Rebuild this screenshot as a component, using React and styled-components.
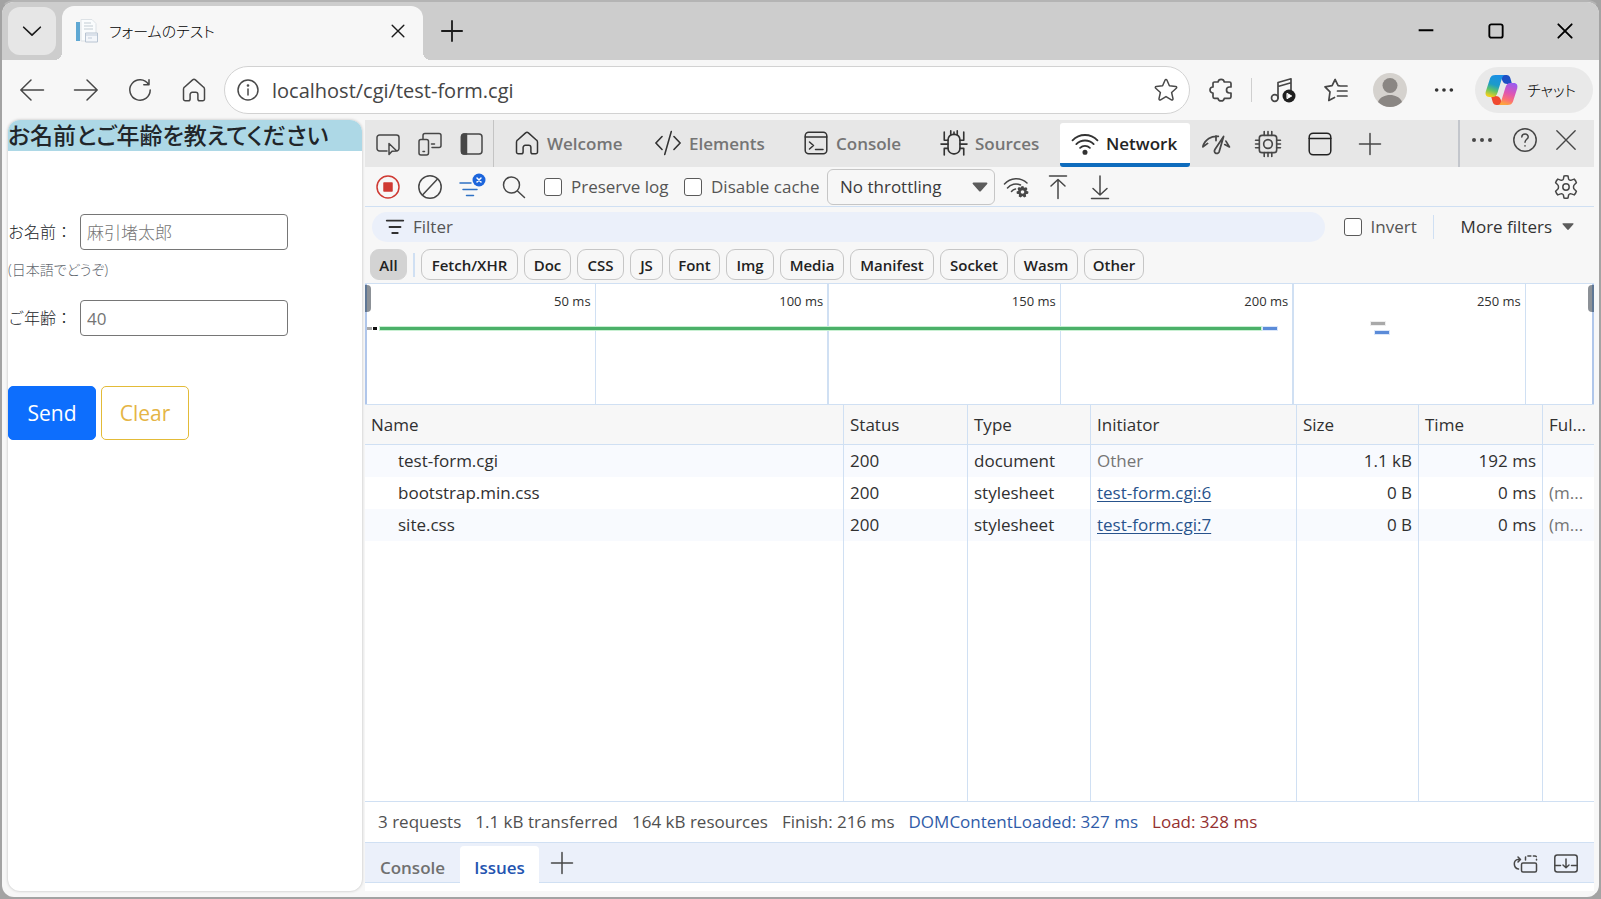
import React, { useState } from 'react';
import styled, { createGlobalStyle } from 'styled-components';

const UI_FONT = `'Open Sans', 'Noto Sans CJK JP', sans-serif`;
const LINE_COLOR = '#d0e0f3';
const ICON_COLOR = '#474747';
const SPAN_MS = 264;

const GlobalStyle = createGlobalStyle`
  * {
    box-sizing: border-box;
  }
  body {
    margin: 0;
    background: #a3a3a3;
    font-family: ${UI_FONT};
    font-size: 16px;
    line-height: 24px;
    color: #303030;
  }
  button, input, select {
    font-family: inherit;
    margin: 0;
  }
`;

const Window = styled.div`
  display: flex;
  flex-direction: column;
  height: 100vh;
  border: 2px solid #a3a3a3;
  border-top-color: #b4b4b4;
  border-radius: 14px;
  background: #f7f7f7;
  overflow: hidden;
`;

const Svg = styled.svg`
  display: block;
  flex: none;
  fill: none;
  stroke: currentColor;
  stroke-width: ${(props) => props.$weight || 1.5};
  stroke-linecap: round;
  stroke-linejoin: round;
  overflow: visible;
`;

const Icon = ({ size = 24, weight, children }) => (
  <Svg
    width={size}
    height={size}
    viewBox="0 0 24 24"
    $weight={weight}
    aria-hidden="true">
    {children}
  </Svg>
);

const IconButton = styled.button`
  display: flex;
  align-items: center;
  justify-content: center;
  flex: none;
  width: ${(props) => props.$width || 42}px;
  height: ${(props) => props.$height || 40}px;
  padding: 0;
  border: 0;
  background: none;
  color: ${(props) => props.$color || ICON_COLOR};
`;

const Spacer = styled.div`
  flex: 1;
`;

/* title bar */

const TitleBar = styled.div`
  display: flex;
  align-items: flex-end;
  flex: none;
  height: 58px;
  padding-left: 6px;
  background: #cdcdcd;
`;

const TabMenuButton = styled.button`
  display: flex;
  align-items: center;
  justify-content: center;
  align-self: center;
  width: 48px;
  height: 48px;
  margin-right: 6px;
  padding: 0;
  border: 0;
  border-radius: 12px;
  background: #e6e6e6;
  color: #1b1b1b;
`;

const BrowserTab = styled.div`
  position: relative;
  display: flex;
  align-items: center;
  width: 361px;
  height: 54px;
  padding: 0 12px 4px 13px;
  border-radius: 12px 12px 0 0;
  background: #f7f7f7;
  &::before,
  &::after {
    content: '';
    position: absolute;
    bottom: 0;
    width: 8px;
    height: 8px;
  }
  &::before {
    left: -8px;
    background: radial-gradient(circle at 0 0, #cdcdcd 8px, #f7f7f7 8px);
  }
  &::after {
    right: -8px;
    background: radial-gradient(circle at 100% 0, #cdcdcd 8px, #f7f7f7 8px);
  }
`;

const TabTitle = styled.span`
  flex: 1;
  padding-left: 10px;
  font-size: 15px;
  font-weight: 300;
  font-feature-settings: 'palt';
  color: #000;
`;

/* address row */

const AddressRow = styled.div`
  display: flex;
  align-items: center;
  flex: none;
  height: 60px;
  padding: 0 6px 0 3px;
`;

const AddressBar = styled.label`
  display: flex;
  align-items: center;
  flex: 1;
  height: 48px;
  margin: 0 10px 0 3px;
  padding: 0 11px;
  border: 1px solid #d2d2d2;
  border-radius: 24px;
  background: #fff;
  color: #4a4a4a;
`;

const AddressInput = styled.input`
  flex: 1;
  min-width: 0;
  padding: 0 12px;
  border: 0;
  outline: 0;
  background: none;
  font-size: 20px;
  color: #454545;
`;

const Divider = styled.span`
  flex: none;
  width: ${(props) => props.$width || 1}px;
  height: ${(props) => props.$height || 24}px;
  margin: 0 ${(props) => props.$gap || 0}px;
  background: ${(props) => props.$color || '#cfcfcf'};
`;

const ChatButton = styled.button`
  display: flex;
  align-items: center;
  gap: 9px;
  width: 118px;
  height: 46px;
  padding: 0 10px;
  border: 0;
  border-radius: 23px;
  background: #e9e9e9;
  font-size: 15px;
  line-height: 20px;
  font-weight: 300;
  font-feature-settings: 'palt';
  color: #000;
`;

/* page */

const Content = styled.div`
  display: flex;
  flex: 1;
  min-height: 0;
  gap: 3px;
  padding: 0 5px 6px 6px;
`;

const Page = styled.main`
  flex: none;
  width: 354px;
  overflow: hidden;
  border-radius: 12px;
  background: #fff;
  box-shadow: 0 0 3px #b8b8b8;
  color: #212529;
`;

const PageTitle = styled.h1`
  margin: 0 0 63px;
  background: lightblue;
  font-size: 23px;
  line-height: 31px;
  font-weight: 500;
  font-feature-settings: 'palt';
  white-space: nowrap;
`;

const FormRow = styled.div`
  display: flex;
  align-items: center;
  gap: 8px;
  height: 36px;
  font-size: 16px;
`;

const FormLabel = styled.label`
  width: 64px;
  font-weight: 300;
  white-space: nowrap;
`;

const FormInput = styled.input`
  width: 208px;
  height: 36px;
  padding: 0 6px;
  border: 1px solid #767676;
  border-radius: 4px;
  font-size: 17px;
  &::placeholder {
    color: #757575;
    opacity: 1;
  }
  &:placeholder-shown {
    font-weight: ${(props) => (props.type === 'number' ? 400 : 300)};
  }
`;

const Hint = styled.div`
  height: 50px;
  padding-top: 8px;
  font-size: 14px;
  font-weight: 300;
  font-feature-settings: 'palt';
  color: #5f676e;
`;

const ButtonRow = styled.div`
  display: flex;
  gap: 5px;
  padding-top: 50px;
`;

const FormButton = styled.button`
  width: 88px;
  height: 54px;
  padding: 0;
  border: 1px solid ${(props) => (props.$primary ? '#0d6efd' : '#e3bb38')};
  border-radius: 5px;
  background: ${(props) => (props.$primary ? '#0d6efd' : '#fff')};
  font-size: 21px;
  color: ${(props) => (props.$primary ? '#fff' : '#e5b545')};
`;

/* devtools */

const DevTools = styled.section`
  display: flex;
  flex-direction: column;
  flex: 1;
  min-width: 0;
  background: #f7f7f7;
`;

const PanelTabs = styled.nav`
  display: flex;
  align-items: center;
  flex: none;
  height: 47px;
  padding: 0 8px 0 2px;
  background: #e7e7e7;
`;

const PanelTab = styled.button`
  display: flex;
  align-items: center;
  align-self: flex-end;
  flex: none;
  gap: 8px;
  width: ${(props) => props.$width}px;
  height: 44px;
  padding: 0 0 0 ${(props) => props.$pad || 12}px;
  border: 0;
  border-bottom: 4px solid ${(props) => (props.$active ? '#0f6cbd' : 'transparent')};
  border-radius: 3px;
  background: ${(props) => (props.$active ? '#fff' : 'none')};
  font-size: 17px;
  font-weight: 600;
  color: ${(props) => (props.$active ? '#242424' : '#757575')};
  svg {
    color: #333;
  }
`;

const PanelTools = styled.div`
  display: flex;
  height: 47px;
  padding-bottom: 7px;
  border-left: 2px solid #c3c6cc;
`;

const ActionBar = styled.div`
  display: flex;
  align-items: center;
  flex: none;
  height: 40px;
  padding: 0 8px 0 2px;
  border-bottom: 1px solid ${LINE_COLOR};
`;

const CheckLabel = styled.label`
  display: flex;
  align-items: center;
  flex: none;
  gap: 9px;
  width: ${(props) => props.$width}px;
  font-size: 17px;
  color: #555;
  white-space: nowrap;
`;

const CheckInput = styled.input`
  appearance: none;
  width: 18px;
  height: 18px;
  border: 1px solid #5a5a5a;
  border-radius: 3px;
  background: #fff;
  &:checked {
    background: #0f6cbd;
  }
`;

const SelectBox = styled.div`
  display: grid;
  align-items: center;
  width: 168px;
  svg {
    grid-area: 1 / 1;
    justify-self: end;
    margin-right: 7px;
    pointer-events: none;
  }
`;

const Select = styled.select`
  grid-area: 1 / 1;
  appearance: none;
  height: 36px;
  padding: 0 12px;
  border: 1px solid #c6c6c6;
  border-radius: 6px;
  background: #f7f7f7;
  font-size: 17px;
  color: #3a3a3a;
`;

const FilterBar = styled.div`
  display: flex;
  align-items: center;
  flex: none;
  height: 39px;
  padding-left: 7px;
  padding-right: 20px;
`;

const FilterBox = styled.label`
  display: flex;
  align-items: center;
  flex: 1;
  gap: 7px;
  height: 30px;
  margin-right: 19px;
  padding-left: 12px;
  border-radius: 15px;
  background: #ebf0fa;
`;

const FilterInput = styled.input`
  flex: 1;
  padding: 0;
  border: 0;
  outline: 0;
  background: none;
  font-size: 17px;
  &::placeholder {
    color: #555;
    opacity: 1;
  }
`;

const MoreFilters = styled.button`
  display: flex;
  align-items: center;
  gap: 10px;
  padding: 0;
  border: 0;
  background: none;
  font-size: 17px;
  color: #333;
  white-space: nowrap;
`;

const ChipBar = styled.div`
  display: flex;
  align-items: center;
  flex: none;
  gap: 6px;
  height: 38px;
  padding-left: 5px;
  border-bottom: 1px solid ${LINE_COLOR};
`;

const Chip = styled.button`
  height: 31px;
  width: ${(props) => props.$width}px;
  padding: 0;
  border: 1px solid ${(props) => (props.$active ? '#d3d3d3' : '#c6c6c6')};
  border-radius: 9px;
  background: ${(props) => (props.$active ? '#d3d3d3' : 'none')};
  font-size: 15px;
  font-weight: 600;
  color: #222;
`;

const Overview = styled.div`
  position: relative;
  display: flex;
  flex: none;
  height: 121px;
  border-bottom: 1px solid ${LINE_COLOR};
  background: #fff;
`;

const TimeCell = styled.div`
  flex: ${(props) => props.$share} 1 0;
  padding: 5px 4px 0 0;
  border-right: ${(props) => props.$line}px solid ${LINE_COLOR};
  font-size: 13px;
  text-align: right;
`;

const TimeBar = styled.div`
  position: absolute;
  top: ${(props) => props.$top}px;
  height: 3px;
  background: ${(props) => props.$color};
  box-shadow: 0 0 0 1px ${(props) => props.$glow || 'transparent'};
`;

const RangeEdge = styled.div`
  position: absolute;
  top: 0;
  bottom: 0;
  ${(props) => props.$side}: 0;
  width: 2px;
  background: #b0c6ea;
  &::before {
    content: '';
    position: absolute;
    top: 1px;
    ${(props) => props.$side}: 0;
    width: 4px;
    height: 27px;
    border-${(props) => props.$side}: 2px solid #5f7795;
    border-radius: ${(props) =>
      props.$side === 'left' ? '0 4px 4px 0' : '4px 0 0 4px'};
    background: #8c9197;
  }
`;

const TableArea = styled.div`
  flex: 1;
  min-height: 0;
  background: #fff;
`;

const RequestTable = styled.table`
  width: 100%;
  height: 100%;
  table-layout: fixed;
  border-collapse: separate;
  border-spacing: 0;
  font-size: 17px;
  th,
  td {
    padding: 0 6px;
    border-left: 1px solid ${LINE_COLOR};
    text-align: left;
    font-weight: 400;
    white-space: nowrap;
    overflow: hidden;
  }
  th:first-child,
  td:first-child {
    border-left: 0;
  }
  th {
    height: 40px;
    border-bottom: 1px solid ${LINE_COLOR};
    background: #f7f7f7;
  }
`;

const RequestRow = styled.tr`
  height: ${(props) => (props.$filler ? 'auto' : '32px')};
  background: ${(props) => (props.$striped ? '#f8fafe' : '#fff')};
  && td:first-child {
    padding-left: 33px;
  }
  && td:nth-child(5),
  && td:nth-child(6) {
    text-align: right;
  }
  td:last-child {
    color: #757575;
  }
`;

const InitiatorLink = styled.a`
  color: #28538c;
  text-underline-offset: 2px;
`;

const Muted = styled.span`
  color: #757575;
`;

const Summary = styled.div`
  display: flex;
  align-items: center;
  flex: none;
  gap: 14px;
  height: 42px;
  padding-left: 13px;
  border-top: 1px solid ${LINE_COLOR};
  border-bottom: 1px solid ${LINE_COLOR};
  background: #fff;
  font-size: 17px;
  color: #505050;
  white-space: nowrap;
`;

const SummaryItem = styled.span`
  color: ${(props) => props.$color || 'inherit'};
`;

const Drawer = styled.div`
  display: flex;
  flex: none;
  height: 48px;
  padding-right: 8px;
  border-bottom: 8px solid #fff;
  background: #ebf0fa;
  box-shadow: inset 0 -1px ${LINE_COLOR};
`;

const DrawerTab = styled.button`
  align-self: flex-end;
  width: ${(props) => props.$width}px;
  height: 37px;
  padding: 6px 0 0;
  border: 0;
  border-radius: 4px 4px 0 0;
  background: ${(props) => (props.$active ? '#fff' : 'none')};
  font-size: 17px;
  font-weight: 600;
  color: ${(props) => (props.$active ? '#2454b0' : '#707070')};
`;

const CHIPS = [
  ['All', 37],
  ['Fetch/XHR', 97],
  ['Doc', 47],
  ['CSS', 47],
  ['JS', 33],
  ['Font', 51],
  ['Img', 48],
  ['Media', 64],
  ['Manifest', 84],
  ['Socket', 68],
  ['Wasm', 64],
  ['Other', 60],
];

const TICKS = [
  { label: '50 ms', share: 232, line: 1 },
  { label: '100 ms', share: 234, line: 2 },
  { label: '150 ms', share: 233, line: 1 },
  { label: '200 ms', share: 234, line: 2 },
  { label: '250 ms', share: 233, line: 1 },
  { label: '', share: 66, line: 0 },
];

const BARS = [
  { start: 0.4, end: 1.4, top: 43, color: '#a9a9a9' },
  { start: 1.7, end: 2.6, top: 43, color: '#111' },
  { start: 3.2, end: 192.5, top: 43, color: '#4bb069', glow: '#c8f0d2' },
  { start: 193, end: 196, top: 43, color: '#5b8bd8', glow: '#dbe7fa' },
  { start: 216.2, end: 219.2, top: 38, color: '#a9a9a9', glow: '#eee' },
  { start: 217, end: 220, top: 47, color: '#5b8bd8', glow: '#dbe7fa' },
];

const COLUMNS = ['Name', 'Status', 'Type', 'Initiator', 'Size', 'Time', 'Ful...'];
const COLUMN_WIDTHS = [undefined, 124, 123, 206, 122, 124, 52];

const REQUESTS = [
  {
    name: 'test-form.cgi',
    type: 'document',
    initiator: 'Other',
    size: '1.1 kB',
    time: '192 ms',
    fulfilled: '',
  },
  {
    name: 'bootstrap.min.css',
    type: 'stylesheet',
    initiator: 'test-form.cgi:6',
    link: true,
    size: '0 B',
    time: '0 ms',
    fulfilled: '(m...',
  },
  {
    name: 'site.css',
    type: 'stylesheet',
    initiator: 'test-form.cgi:7',
    link: true,
    size: '0 B',
    time: '0 ms',
    fulfilled: '(m...',
  },
];

const HomeIcon = () => (
  <Icon>
    <path d="M1.5 11.2c0-.8.3-1.500.9-2l8.200-7.300a2 2 0 0 1 2.800 0l8.200 7.300c.6.500.9 1.200.9 2V21a1.800 1.800 0 0 1-1.800 1.800h-3a1.800 1.800 0 0 1-1.800-1.800v-4.500a2.200 2.200 0 0 0-2.200-2.200h-3.400a2.200 2.200 0 0 0-2.200 2.200V21a1.800 1.800 0 0 1-1.800 1.800h-3A1.800 1.800 0 0 1 1.500 21z" />
  </Icon>
);

const PlusIcon = () => (
  <Icon>
    <path d="M12 1.500v21M1.500 12h21" />
  </Icon>
);

const DotsIcon = () => (
  <Icon>
    <g fill="currentColor" stroke="none">
      <circle cx="4" cy="12" r="2" />
      <circle cx="12" cy="12" r="2" />
      <circle cx="20" cy="12" r="2" />
    </g>
  </Icon>
);

const WifiIcon = () => (
  <Icon size={26} weight={1.700}>
    <path d="M.5 9.500a16 16 0 0 1 23 0M4 13a11.300 11.300 0 0 1 16 0M7.500 16.500a6.400 6.400 0 0 1 9 0" />
    <circle cx="12" cy="20.500" r="1.500" fill="currentColor" />
  </Icon>
);

const Triangle = ({ width = 16, height = 10 }) => (
  <svg width={width} height={height} viewBox="0 0 16 10" aria-hidden="true">
    <path
      d="M1.500.5h13c.8 0 1.200.9.700 1.500L9 9c-.6.7-1.400.7-2 0L.8 2C.3 1.400.7.500 1.500.500z"
      fill="#5c5c5c"
    />
  </svg>
);

const CopilotLogo = () => (
  <svg width="33" height="32" viewBox="0 0 33 32" aria-hidden="true">
    <defs>
      <linearGradient id="cpLeft" x1="0.600" y1="0" x2="0.300" y2="1">
        <stop offset="0" stopColor="#1a8fe6" />
        <stop offset="0.450" stopColor="#1c9bc9" />
        <stop offset="0.700" stopColor="#5cc26a" />
        <stop offset="1" stopColor="#f5cf1a" />
      </linearGradient>
      <linearGradient id="cpRight" x1="0.700" y1="0" x2="0.400" y2="1">
        <stop offset="0" stopColor="#9a5cf0" />
        <stop offset="0.450" stopColor="#dd55b5" />
        <stop offset="0.750" stopColor="#fb6f77" />
        <stop offset="1" stopColor="#fda63c" />
      </linearGradient>
    </defs>
    <path d="M15 1h6.500c2 0 3.200 1 3.800 3l1.700 6h-4.500c-2.500 0-4.500-1-5.200-3.500z" fill="#1d4fc4" />
    <path d="M18 31h-6.500c-2 0-3.200-1-3.800-3L6 22h4.500c2.500 0 4.500 1 5.200 3.500z" fill="#f0492f" />
    <path
      d="M10.500 1H20c-1.800.5-2.600 1.800-3.200 3.700l-4.300 14c-.9 2.700-2 4.300-5 4.300H4.300C1 23 0 20.500.8 17.600L5 4.500C5.800 2 7.500 1 10.500 1z"
      fill="url(#cpLeft)"
    />
    <path
      d="M22.500 31H13c1.800-.5 2.600-1.800 3.200-3.700l4.300-14c.9-2.700 2-4.300 5-4.300h3.200c3.300 0 4.300 2.500 3.500 5.400L28 27.500c-.8 2.500-2.500 3.500-5.500 3.500z"
      fill="url(#cpRight)"
    />
  </svg>
);

const Favicon = () => (
  <svg width="24" height="24" viewBox="0 0 24 24" aria-hidden="true">
    <path d="M6 .5h11l4 4V22H6z" fill="#fafcfd" stroke="#dde2e6" />
    <path d="M1 3h4v19H1z" fill="#5fa8d3" />
    <path d="M9 4h7M9 7h9M9 10h9" stroke="#d5dce1" strokeWidth="1.500" />
    <path d="M10.500 14h12v9h-12z" fill="#f3f6fa" stroke="#b8c4d2" />
    <path d="M11 16h11M13 19h4" stroke="#c2cddb" />
  </svg>
);

const TitleRow = () => (
  <TitleBar>
    <TabMenuButton aria-label="Tab actions">
      <Icon size={20} weight={2}>
        <path d="M2 7.500 12 17 22 7.500" />
      </Icon>
    </TabMenuButton>
    <BrowserTab>
      <Favicon />
      <TabTitle>フォームのテスト</TabTitle>
      <IconButton $width={26} $color="#1b1b1b" aria-label="Close tab">
        <Icon size={14} weight={2.400}>
          <path d="m2 2 20 20M22 2 2 22" />
        </Icon>
      </IconButton>
    </BrowserTab>
    <IconButton $width={58} $height={58} $color="#1b1b1b" aria-label="New tab">
      <Icon size={22} weight={2}>
        <path d="M12 1v22M1 12h22" />
      </Icon>
    </IconButton>
    <Spacer />
    <IconButton $width={70} $height={58} $color="#000" aria-label="Minimize">
      <Icon size={16} weight={3}>
        <path d="M1 11h22" strokeLinecap="butt" />
      </Icon>
    </IconButton>
    <IconButton $width={69} $height={58} $color="#000" aria-label="Maximize">
      <Icon size={16} weight={2.800}>
        <rect x="2" y="2" width="20" height="20" rx="3" />
      </Icon>
    </IconButton>
    <IconButton $width={69} $height={58} $color="#000" aria-label="Close">
      <Icon size={16} weight={2.800}>
        <path d="m2 2 20 20m0-20-20 20" />
      </Icon>
    </IconButton>
  </TitleBar>
);

const NavRow = () => {
  const [url, setUrl] = useState('localhost/cgi/test-form.cgi');
  return (
    <AddressRow>
      <IconButton $width={54} aria-label="Back">
        <Icon>
          <path d="M23.500 12H.8M11 2 .8 12 11 22" />
        </Icon>
      </IconButton>
      <IconButton $width={54} aria-label="Forward">
        <Icon>
          <path d="M.5 12h22.700M13 2l10.200 10L13 22" />
        </Icon>
      </IconButton>
      <IconButton $width={54} aria-label="Refresh">
        <Icon>
          <path d="M20.600 6.500A10.200 10.200 0 1 0 22.200 12M21 1.800v5h-5.200" />
        </Icon>
      </IconButton>
      <IconButton $width={54} aria-label="Home">
        <HomeIcon />
      </IconButton>
      <AddressBar>
        <Icon>
          <circle cx="12" cy="12" r="10" />
          <path d="M12 11v6" />
          <circle cx="12" cy="7.500" r=".6" fill="currentColor" />
        </Icon>
        <AddressInput
          aria-label="Address"
          value={url}
          onChange={(e) => setUrl(e.target.value)}
        />
        <Icon>
          <path d="M11 2.200c.4-.9 1.600-.9 2 0l2.400 5.600 6.300.6c1 .1 1.400 1.200.6 1.900l-4.700 4.200 1.400 6.200c.2 1-.8 1.700-1.600 1.200L12 18.600l-5.400 3.300c-.8.500-1.800-.2-1.600-1.200l1.400-6.200-4.700-4.200c-.8-.7-.4-1.800.6-1.900l6.300-.6z" />
        </Icon>
      </AddressBar>
      <IconButton $width={42} aria-label="Extensions">
        <Icon weight={1.700}>
          <path d="M4 5.500A1.500 1.500 0 0 1 5.500 4H9a3.200 3.200 0 0 1 6.300 0h5.200A1.500 1.500 0 0 1 22 5.500V9h-1.500a3 3 0 0 0 0 6H22v3.800a1.500 1.500 0 0 1-1.500 1.500h-5.200a3.200 3.200 0 0 1-6.300 0H5.500A1.500 1.500 0 0 1 4 18.800V15a3 3 0 1 1 0-6z" />
        </Icon>
      </IconButton>
      <Divider $gap={9} />
      <IconButton $width={44} aria-label="Media">
        <Icon weight={1.700}>
          <circle cx="3.800" cy="20" r="3.300" />
          <path d="M7 20V4.500L20 .8V12M7 8.500l13-3.700" />
          <circle cx="18" cy="18" r="6.500" fill="#1f1f1f" stroke="none" />
          <path d="m16.300 15.500 4.400 2.500-4.400 2.500z" fill="#fff" stroke="#fff" strokeWidth="1" />
        </Icon>
      </IconButton>
      <IconButton $width={62} aria-label="Favorites">
        <Icon weight={1.700}>
          <path d="M23 8h-6.500l-2.400-.4-3-6.100-3 6.100L1 8.800l5 5-1.200 8.700 5.700-3M13.500 13H23M13.500 18H23M16 8h7" />
        </Icon>
      </IconButton>
      <IconButton $width={46} aria-label="Profile">
        <svg width="34" height="34" viewBox="0 0 34 34" aria-hidden="true">
          <circle cx="17" cy="17" r="17" fill="#d5d2ce" />
          <circle cx="17" cy="12.500" r="7.500" fill="#8a8683" />
          <path d="M5 29c2-5 7-7 12-7s10 2 12 7a17 17 0 0 1-24 0z" fill="#8a8683" />
        </svg>
      </IconButton>
      <IconButton $width={62} $color="#333" aria-label="Settings and more">
        <Icon size={22}>
          <g fill="currentColor" stroke="none">
            <circle cx="4" cy="12" r="2" />
            <circle cx="12" cy="12" r="2" />
            <circle cx="20" cy="12" r="2" />
          </g>
        </Icon>
      </IconButton>
      <ChatButton>
        <CopilotLogo />
        チャット
      </ChatButton>
    </AddressRow>
  );
};

const FormPage = () => (
  <Page>
    <PageTitle>お名前とご年齢を教えてください</PageTitle>
    <form onSubmit={(e) => e.preventDefault()}>
      <FormRow>
        <FormLabel htmlFor="name">お名前：</FormLabel>
        <FormInput id="name" type="text" placeholder="麻引堵太郎" />
      </FormRow>
      <Hint>(日本語でどうぞ)</Hint>
      <FormRow>
        <FormLabel htmlFor="age">ご年齢：</FormLabel>
        <FormInput id="age" type="number" placeholder="40" />
      </FormRow>
      <ButtonRow>
        <FormButton type="submit" $primary>
          Send
        </FormButton>
        <FormButton type="reset">Clear</FormButton>
      </ButtonRow>
    </form>
  </Page>
);

const Tabs = () => (
  <PanelTabs>
    <IconButton aria-label="Inspect">
      <Icon>
        <path d="M11 19H3.500A2.500 2.500 0 0 1 1 16.500v-11A2.500 2.500 0 0 1 3.500 3h17A2.500 2.500 0 0 1 23 5.500v11a2.500 2.500 0 0 1-1.500 2.300" />
        <path d="M13 11.500v11l3-3.300 4.800-.2z" />
      </Icon>
    </IconButton>
    <IconButton aria-label="Device emulation">
      <Icon>
        <rect x="1" y="7.500" width="9.500" height="15.500" rx="2" />
        <path d="M5 7V3.500A2 2 0 0 1 7 1.500h14A2 2 0 0 1 23 3.500v10a2 2 0 0 1-2 2h-7M13.500 12h3M5 19.500h1.500" />
      </Icon>
    </IconButton>
    <IconButton aria-label="Activity bar">
      <Icon>
        <rect x="1.500" y="2" width="20.500" height="20" rx="3" />
        <path d="M4 2h2.500v20H4a2.500 2.500 0 0 1-2.500-2.500v-15A2.500 2.500 0 0 1 4 2z" fill="currentColor" />
      </Icon>
    </IconButton>
    <Divider $height={47} $color="#c4c4c4" />
    <PanelTab $width={142} $pad={21}>
      <HomeIcon />
      Welcome
    </PanelTab>
    <PanelTab $width={149} $pad={19}>
      <Icon size={26}>
        <path d="M6.500 6 .8 12l5.700 6M17.500 6l5.700 6-5.700 6M15 1.500 9 22.500" />
      </Icon>
      Elements
    </PanelTab>
    <PanelTab $width={137} $pad={19}>
      <Icon>
        <rect x="1.200" y="1.200" width="21.600" height="21.600" rx="3.500" />
        <path d="M1.200 6h21.600M5.500 11l4 3.500-4 3.500M11.500 18.500h7.500" />
      </Icon>
      Console
    </PanelTab>
    <PanelTab $width={138} $pad={19}>
      <Icon size={26}>
        <rect x="6.500" y="4" width="11" height="18" rx="5" />
        <path d="M9 4.500V.8M15 4.500V.8M12 4V2M6.500 9.500H3V2M17.500 9.500H21V2M6.500 13H0M17.500 13H24M6.500 17H3v6M17.500 17H21v6" />
      </Icon>
      Sources
    </PanelTab>
    <PanelTab $width={130} $active>
      <WifiIcon />
      Network
    </PanelTab>
    <IconButton $width={52} aria-label="Performance">
      <Icon size={28}>
        <path d="M.8 14A12 12 0 0 1 14 5.500M.8 14.500l4-3M12 5v4M20.500 9.500l3 5-4-2" />
        <path d="m18.500 5.500-7.300 11c-2 3 2 5.200 3.500 2.200z" />
      </Icon>
    </IconButton>
    <IconButton $width={52} aria-label="Memory">
      <Icon size={26}>
        <rect x="4" y="4" width="16" height="16" rx="2.500" />
        <circle cx="12" cy="12" r="4" />
        <path d="M8.500 4V.5M12 4V.5M15.500 4V.5M8.500 23.500V20M12 23.500V20M15.500 23.500V20M4 8.500H.5M4 12H.5M4 15.500H.5M23.500 8.500H20M23.500 12H20M23.500 15.500H20" />
      </Icon>
    </IconButton>
    <IconButton $width={52} $color="#222" aria-label="Application">
      <Icon>
        <rect x="1.200" y="1.200" width="21.600" height="21.600" rx="4" />
        <path d="M1.200 6.500h21.600" />
      </Icon>
    </IconButton>
    <IconButton $width={48} aria-label="More tools">
      <PlusIcon />
    </IconButton>
    <Spacer />
    <PanelTools>
      <IconButton $width={44} aria-label="Customize">
        <DotsIcon />
      </IconButton>
      <IconButton $width={42} aria-label="Help">
        <Icon>
          <circle cx="12" cy="12" r="11.200" />
          <path d="M8.800 9c.2-4 6.600-3.800 6.400 0-.1 2.200-3.200 2.500-3.200 5.200M12 17.800v.1" />
        </Icon>
      </IconButton>
      <IconButton $width={40} aria-label="Close DevTools">
        <Icon size={22}>
          <path d="m2 2 20 20M22 2 2 22" />
        </Icon>
      </IconButton>
    </PanelTools>
  </PanelTabs>
);

const Actions = () => (
  <ActionBar>
    <IconButton $color="#cf3a33" aria-label="Record">
      <Icon>
        <circle cx="12" cy="12" r="11" />
        <rect x="8" y="8" width="8" height="8" fill="currentColor" />
      </Icon>
    </IconButton>
    <IconButton aria-label="Clear">
      <Icon>
        <circle cx="12" cy="12" r="11.200" />
        <path d="M4.500 20 19.500 4" />
      </Icon>
    </IconButton>
    <IconButton $color="#2f72c4" aria-label="Filter">
      <Icon>
        <path d="M0 8h11M3 14.500h14M6.500 20.500h7" />
        <circle cx="19" cy="5" r="6.500" fill="#1c65dc" stroke="none" />
        <path d="m17 3 4 4m0-4-4 4" stroke="#fff" />
      </Icon>
    </IconButton>
    <IconButton aria-label="Search">
      <Icon>
        <circle cx="9.500" cy="10" r="8" />
        <path d="m15.500 16 7 6.500" />
      </Icon>
    </IconButton>
    <Divider $gap={4} $color="transparent" />
    <CheckLabel $width={140}>
      <CheckInput type="checkbox" />
      Preserve log
    </CheckLabel>
    <CheckLabel $width={143}>
      <CheckInput type="checkbox" />
      Disable cache
    </CheckLabel>
    <SelectBox>
      <Select aria-label="Throttling">
        <option>No throttling</option>
      </Select>
      <Triangle />
    </SelectBox>
    <IconButton aria-label="Network conditions">
      <Icon>
        <path d="M.5 9a15.500 15.500 0 0 1 22.500-1M3.500 13a11 11 0 0 1 13-3M7.500 16.500a7 7 0 0 1 4-2.500" />
        <g stroke="none" fill="currentColor">
          <path d="m17 11.500 2.300-.5.700 1.800 2.300-.6 1.200 1.700-1.200 1.700 2.200 1.200-.4 2-2.300.5.400 2.300-2 1-1.700-1.500-1.800 1.500-2-1 .4-2.400-2.300-.4-.3-2.100 2-1.200-1-1.800 1.300-1.600 1.900.6z" />
          <circle cx="18.500" cy="17" r="1.800" fill="#f7f7f7" />
        </g>
      </Icon>
    </IconButton>
    <IconButton aria-label="Import HAR">
      <Icon>
        <path d="M3.500 1h17M12 23.500V4.500M5 11l7-6.500 7 6.500" />
      </Icon>
    </IconButton>
    <IconButton aria-label="Export HAR">
      <Icon>
        <path d="M3.500 23.500h17M12 1v19M5 13.500l7 6.500 7-6.500" />
      </Icon>
    </IconButton>
    <Spacer />
    <IconButton $width={40} aria-label="Settings">
      <Icon>
        <circle cx="12" cy="12" r="3.200" />
        <path d="M10 1q2-.6 4 0l.6 2.900q.3.900 1.200 1.200.8.400 1.600 0l2.800-1q1.600 1.500 2.200 3.600L20.300 9.700q-.8.700-.8 2.300t.8 2.300l2.100 2q-.6 2.100-2.200 3.600l-2.800-1q-.8-.4-1.600 0-.9.300-1.200 1.200L14 23q-2 .6-4 0l-.6-2.900q-.3-.9-1.200-1.200-.8-.4-1.600 0l-2.800 1Q2.200 18.400 1.600 16.300l2.100-2q.8-.7.8-2.300t-.8-2.300l-2.100-2q.6-2.100 2.200-3.600l2.800 1q.8.400 1.600 0 .9-.3 1.200-1.200z" />
      </Icon>
    </IconButton>
  </ActionBar>
);

const Filters = () => (
  <>
    <FilterBar>
      <FilterBox>
        <Icon size={22} weight={2}>
          <path d="M3 5h18M6 12h12M9 18.500h6" />
        </Icon>
        <FilterInput placeholder="Filter" aria-label="Filter" />
      </FilterBox>
      <CheckLabel $width={89}>
        <CheckInput type="checkbox" />
        Invert
      </CheckLabel>
      <Divider $color={LINE_COLOR} />
      <Divider $gap={13} $color="transparent" />
      <MoreFilters>
        More filters
        <Triangle width={12} height={9} />
      </MoreFilters>
    </FilterBar>
    <ChipBar>
      {CHIPS.map(([label, width], idx) => (
        <React.Fragment key={label}>
          <Chip $width={width} $active={idx === 0}>
            {label}
          </Chip>
          {idx === 0 && <Divider $width={2} $color={LINE_COLOR} />}
        </React.Fragment>
      ))}
    </ChipBar>
  </>
);

const Timeline = () => (
  <Overview>
    {TICKS.map((tick) => (
      <TimeCell key={tick.label} $share={tick.share} $line={tick.line}>
        {tick.label}
      </TimeCell>
    ))}
    {BARS.map((bar) => (
      <TimeBar
        key={bar.start}
        $top={bar.top}
        $color={bar.color}
        $glow={bar.glow}
        style={{
          left: `${(bar.start / SPAN_MS) * 100}%`,
          width: `${((bar.end - bar.start) / SPAN_MS) * 100}%`,
        }}
      />
    ))}
    <RangeEdge $side="left" />
    <RangeEdge $side="right" />
  </Overview>
);

const Requests = () => (
  <TableArea>
    <RequestTable>
      <colgroup>
        {COLUMN_WIDTHS.map((width, idx) => (
          <col key={COLUMNS[idx]} width={width} />
        ))}
      </colgroup>
      <thead>
        <tr>
          {COLUMNS.map((column) => (
            <th key={column}>{column}</th>
          ))}
        </tr>
      </thead>
      <tbody>
        {REQUESTS.map((item, idx) => (
          <RequestRow key={item.name} $striped={idx % 2 === 0}>
            <td>{item.name}</td>
            <td>200</td>
            <td>{item.type}</td>
            <td>
              {item.link ? (
                <InitiatorLink href="#">{item.initiator}</InitiatorLink>
              ) : (
                <Muted>{item.initiator}</Muted>
              )}
            </td>
            <td>{item.size}</td>
            <td>{item.time}</td>
            <td>{item.fulfilled}</td>
          </RequestRow>
        ))}
        <RequestRow $filler>
          {COLUMNS.map((column) => (
            <td key={column} />
          ))}
        </RequestRow>
      </tbody>
    </RequestTable>
  </TableArea>
);

const Footer = () => (
  <>
    <Summary>
      <SummaryItem>3 requests</SummaryItem>
      <SummaryItem>1.1 kB transferred</SummaryItem>
      <SummaryItem>164 kB resources</SummaryItem>
      <SummaryItem>Finish: 216 ms</SummaryItem>
      <SummaryItem $color="#2f5ba8">DOMContentLoaded: 327 ms</SummaryItem>
      <SummaryItem $color="#94302f">Load: 328 ms</SummaryItem>
    </Summary>
    <Drawer>
      <DrawerTab $width={95}>Console</DrawerTab>
      <DrawerTab $width={79} $active>
        Issues
      </DrawerTab>
      <IconButton $width={46} aria-label="More drawer tools">
        <PlusIcon />
      </IconButton>
      <Spacer />
      <IconButton aria-label="Move to top">
        <Icon>
          <rect x="8.500" y="12" width="15" height="9" rx="1.500" />
          <path d="M12.500 9V6.500A1.500 1.500 0 0 1 14 5h8a1.500 1.500 0 0 1 1.500 1.500V9" strokeDasharray="3 2.500" />
          <path d="M5.500 18C0 17 0 8.500 5 8.500h2M5 6l2.500 2.500L5 11" />
        </Icon>
      </IconButton>
      <IconButton $width={40} aria-label="Collapse drawer">
        <Icon>
          <rect x=".8" y="4" width="22.400" height="17" rx="2.500" />
          <path d="M1 14.500h5.500M17.500 14.500H23M12 8v8.500M9 14l3 2.700 3-2.700" />
        </Icon>
      </IconButton>
    </Drawer>
  </>
);

const App = () => {
  return (
    <>
      <GlobalStyle />
      <Window>
        <TitleRow />
        <NavRow />
        <Content>
          <FormPage />
          <DevTools>
            <Tabs />
            <Actions />
            <Filters />
            <Timeline />
            <Requests />
            <Footer />
          </DevTools>
        </Content>
      </Window>
    </>
  );
};

export default App;
